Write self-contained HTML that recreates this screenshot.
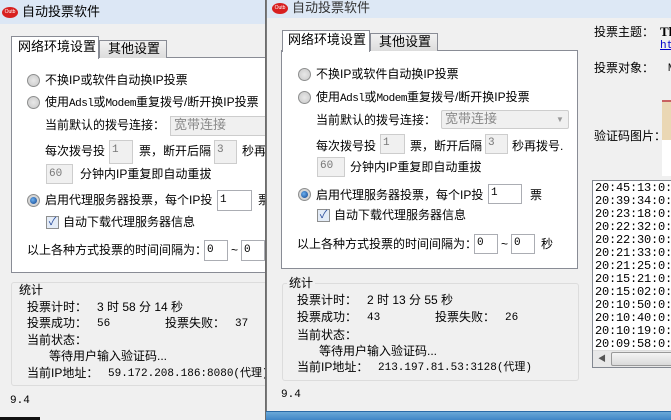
<!DOCTYPE html>
<html><head><meta charset="utf-8"><style>
*{margin:0;padding:0;box-sizing:border-box}
body{width:671px;height:420px;overflow:hidden;background:#f0f0f0;position:relative;font-family:"Liberation Sans","Noto Sans CJK SC",sans-serif;font-size:12px;color:#000}
.a{position:absolute;white-space:nowrap;line-height:14px}
.box{position:absolute;background:#fff;border:1px solid #abadb3}
.dis{background:#f0f0f0;border-color:#cdcdcd}
.rad{position:absolute;width:13px;height:13px;border-radius:50%;border:1px solid #8e8f8f;background:radial-gradient(circle,#e8e8e8,#c8c8c8)}
.rad.on::after{content:"";position:absolute;left:2px;top:2px;width:7px;height:7px;border-radius:50%;background:radial-gradient(circle at 40% 40%,#6cb0f0,#0d3f8a)}
.chk{position:absolute;width:13px;height:13px;border:1px solid #8e8f8f;background:#e4ecf7;color:#2a4d9c;font-size:11px;line-height:11px;text-align:center}
.mono{font-family:"Liberation Mono","Noto Sans CJK SC",monospace;font-size:11px}
.m{font-family:"Liberation Mono",monospace;font-size:11px;letter-spacing:-0.5px}
.win{position:absolute;background:#f0f0f0;overflow:hidden}
.logo{position:absolute;width:16px;height:11px;border-radius:50%;background:#d82020;color:#fff;font-size:5px;line-height:11px;text-align:center}
.log div{height:13px;line-height:13px;overflow:hidden;white-space:nowrap}
</style></head><body>
<!-- back window -->
<div class="win" style="left:0;top:0;width:266px;height:420px;border-right:1px solid #6c6c6c">
 <div style="position:absolute;left:0;top:0;width:266px;height:24px;background:#dce7f5"></div>
 <div class="logo" style="left:2px;top:7px">Outb</div>
 <div class="a" style="left:22px;top:5px;font-size:13px">自动投票软件</div>
 <div style="position:absolute;left:11px;top:57px;width:270px;height:216px;border:1px solid #898c95;background:#fff"></div>
 <div style="position:absolute;left:11px;top:36px;width:88px;height:23px;border:1px solid #898c95;border-bottom:none;background:#fff"></div>
 <div class="a" style="left:18px;top:40px;font-size:13px">网络环境设置</div>
 <div style="position:absolute;left:99px;top:40px;width:68px;height:18px;border:1px solid #898c95;border-bottom:none;background:linear-gradient(#f2f2f2,#dcdcdc)"></div>
 <div class="a" style="left:108px;top:42px;font-size:13px">其他设置</div>
 <div class="rad" style="left:27px;top:74px"></div><div class="a" style="left:45px;top:73px">不换IP或软件自动换IP投票</div>
 <div class="rad" style="left:27px;top:96px"></div><div class="a" style="left:45px;top:95px">使用<span class="m">Adsl</span>或<span class="m">Modem</span>重复拨号/断开换IP投票</div>
 <div class="a" style="left:45px;top:118px">当前默认的拨号连接：</div>
 <div class="box dis" style="left:170px;top:116px;width:100px;height:20px"></div><div class="a" style="left:174px;top:118px;color:#8a8a8a;font-size:13px">宽带连接</div>
 <div class="a" style="left:45px;top:144px">每次拨号投</div>
 <div class="box dis" style="left:109px;top:140px;width:24px;height:24px"></div><div class="a mono" style="left:112px;top:143px;color:#777">1</div>
 <div class="a" style="left:139px;top:144px">票，断开后隔</div>
 <div class="box dis" style="left:214px;top:140px;width:23px;height:24px"></div><div class="a mono" style="left:217px;top:143px;color:#777">3</div>
 <div class="a" style="left:242px;top:144px">秒再</div>
 <div class="box dis" style="left:46px;top:164px;width:27px;height:20px"></div><div class="a mono" style="left:49px;top:167px;color:#777">60</div>
 <div class="a" style="left:80px;top:167px">分钟内IP重复即自动重拔</div>
 <div class="rad on" style="left:27px;top:194px"></div><div class="a" style="left:45px;top:193px">启用代理服务器投票，每个IP投</div>
 <div class="box" style="left:217px;top:190px;width:35px;height:21px"></div><div class="a mono" style="left:220px;top:193px">1</div>
 <div class="a" style="left:258px;top:193px">票</div>
 <div class="chk" style="left:46px;top:216px">✓</div><div class="a" style="left:63px;top:215px">自动下载代理服务器信息</div>
 <div class="a" style="left:27px;top:243px">以上各种方式投票的时间间隔为：</div>
 <div class="box" style="left:204px;top:240px;width:24px;height:21px"></div><div class="a mono" style="left:207px;top:243px">0</div>
 <div class="a" style="left:231px;top:243px">~</div>
 <div class="box" style="left:241px;top:240px;width:24px;height:21px"></div><div class="a mono" style="left:244px;top:243px">0</div>
 <div style="position:absolute;left:11px;top:282px;width:270px;height:104px;border:1px solid #dcdcdc;border-radius:3px"></div>
 <div class="a" style="left:17px;top:283px;background:#f0f0f0;padding:0 2px">统计</div>
 <div class="a" style="left:27px;top:300px">投票计时：</div><div class="a" style="left:97px;top:300px">3 时 58 分 14 秒</div>
 <div class="a" style="left:27px;top:316px">投票成功：</div><div class="a mono" style="left:97px;top:317px">56</div>
 <div class="a" style="left:165px;top:316px">投票失败：</div><div class="a mono" style="left:235px;top:317px">37</div>
 <div class="a" style="left:27px;top:333px">当前状态：</div>
 <div class="a" style="left:49px;top:349px">等待用户输入验证码...</div>
 <div class="a" style="left:27px;top:366px">当前IP地址：</div><div class="a mono" style="left:108px;top:367px">59.172.208.186:8080(代理)</div>
 <div class="a mono" style="left:10px;top:394px">9.4</div>
 <div style="position:absolute;left:0;top:417px;width:40px;height:3px;background:#111"></div>
</div>
<!-- front window -->
<div class="win" style="left:266px;top:0;width:405px;height:412px;border-left:1px solid #7a7a7a">
 <div style="position:absolute;left:0;top:0;width:405px;height:18px;background:#dde8f5"></div>
 <div class="logo" style="left:5px;top:3px">Outb</div>
 <div class="a" style="left:25px;top:1px;font-size:13px;color:#333">自动投票软件</div>
 <div style="position:absolute;left:14px;top:50px;width:297px;height:219px;border:1px solid #898c95;background:#fff"></div>
 <div style="position:absolute;left:15px;top:30px;width:88px;height:22px;border:1px solid #898c95;border-bottom:none;background:#fff"></div>
 <div class="a" style="left:21px;top:33px;font-size:13px">网络环境设置</div>
 <div style="position:absolute;left:103px;top:33px;width:68px;height:18px;border:1px solid #898c95;border-bottom:none;background:linear-gradient(#f2f2f2,#dcdcdc)"></div>
 <div class="a" style="left:112px;top:35px;font-size:13px">其他设置</div>
 <div class="rad" style="left:31px;top:68px"></div><div class="a" style="left:49px;top:67px">不换IP或软件自动换IP投票</div>
 <div class="rad" style="left:31px;top:91px"></div><div class="a" style="left:49px;top:90px">使用<span class="m">Adsl</span>或<span class="m">Modem</span>重复拨号/断开换IP投票</div>
 <div class="a" style="left:49px;top:113px">当前默认的拨号连接：</div>
 <div class="box dis" style="left:174px;top:110px;width:128px;height:19px;border-radius:2px"></div><div class="a" style="left:178px;top:112px;color:#8a8a8a;font-size:13px">宽带连接</div><div class="a" style="left:289px;top:113px;color:#999;font-size:8px">▼</div>
 <div class="a" style="left:49px;top:139px">每次拨号投</div>
 <div class="box dis" style="left:113px;top:134px;width:25px;height:20px"></div><div class="a mono" style="left:116px;top:136px;color:#777">1</div>
 <div class="a" style="left:143px;top:139px">票，断开后隔</div>
 <div class="box dis" style="left:218px;top:134px;width:23px;height:20px"></div><div class="a mono" style="left:221px;top:136px;color:#777">3</div>
 <div class="a" style="left:245px;top:139px">秒再拨号.</div>
 <div class="box dis" style="left:50px;top:157px;width:28px;height:20px"></div><div class="a mono" style="left:53px;top:159px;color:#777">60</div>
 <div class="a" style="left:83px;top:160px">分钟内IP重复即自动重拔</div>
 <div class="rad on" style="left:31px;top:188px"></div><div class="a" style="left:49px;top:188px">启用代理服务器投票，每个IP投</div>
 <div class="box" style="left:221px;top:184px;width:34px;height:20px"></div><div class="a mono" style="left:224px;top:186px">1</div>
 <div class="a" style="left:263px;top:188px">票</div>
 <div class="chk" style="left:50px;top:209px">✓</div><div class="a" style="left:67px;top:208px">自动下载代理服务器信息</div>
 <div class="a" style="left:30px;top:237px">以上各种方式投票的时间间隔为：</div>
 <div class="box" style="left:207px;top:234px;width:24px;height:20px"></div><div class="a mono" style="left:210px;top:236px">0</div>
 <div class="a" style="left:234px;top:237px">~</div>
 <div class="box" style="left:244px;top:234px;width:24px;height:20px"></div><div class="a mono" style="left:247px;top:236px">0</div>
 <div class="a" style="left:274px;top:237px">秒</div>
 <div style="position:absolute;left:15px;top:283px;width:297px;height:98px;border:1px solid #dcdcdc;border-radius:3px"></div>
 <div class="a" style="left:20px;top:276px;background:#f0f0f0;padding:0 2px">统计</div>
 <div class="a" style="left:30px;top:293px">投票计时：</div><div class="a" style="left:100px;top:293px">2 时 13 分 55 秒</div>
 <div class="a" style="left:30px;top:310px">投票成功：</div><div class="a mono" style="left:100px;top:311px">43</div>
 <div class="a" style="left:168px;top:310px">投票失败：</div><div class="a mono" style="left:238px;top:311px">26</div>
 <div class="a" style="left:30px;top:328px">当前状态：</div>
 <div class="a" style="left:52px;top:344px">等待用户输入验证码...</div>
 <div class="a" style="left:30px;top:360px">当前IP地址：</div><div class="a mono" style="left:111px;top:361px">213.197.81.53:3128(代理)</div>
 <div class="a mono" style="left:14px;top:388px">9.4</div>
 <!-- right side -->
 <div class="a" style="left:327px;top:25px">投票主题：</div>
 <div class="a" style="left:393px;top:25px;font-weight:bold;font-family:'Liberation Serif',serif;font-size:13px">Th</div>
 <div class="a" style="left:393px;top:39px;color:#0000cc;text-decoration:underline;font-family:'Liberation Mono',monospace;font-size:11px">htt</div>
 <div class="a" style="left:327px;top:61px">投票对象：</div>
 <div class="a mono" style="left:401px;top:62px">M</div>
 <div style="position:absolute;left:395px;top:100px;width:12px;height:40px;background:#ead7b4;border-top:2px solid #c86060"></div>
 <div style="position:absolute;left:395px;top:140px;width:12px;height:36px;background:#fff"></div>
 <div class="a" style="left:327px;top:129px">验证码图片：</div>
 <div style="position:absolute;left:325px;top:180px;width:90px;height:188px;border:1px solid #828790;background:#fff;overflow:hidden">
  <div class="mono log" style="position:absolute;left:2px;top:1px;font-size:12px;letter-spacing:-0.2px"><div>20:45:13:0:IP</div><div>20:39:34:0:IP</div><div>20:23:18:0:IP</div><div>20:22:32:0:投</div><div>20:22:30:0:IP</div><div>20:21:33:0:投</div><div>20:21:25:0:IP</div><div>20:15:21:0:投</div><div>20:15:02:0:IP</div><div>20:10:50:0:投</div><div>20:10:40:0:投</div><div>20:10:19:0:投</div><div>20:09:58:0:IP</div><div>20:09:49:0:IP</div></div>
  <div style="position:absolute;left:0;top:169px;width:90px;height:18px;background:#e8e8e8;border-top:1px solid #ddd"></div>
  <div class="a" style="left:5px;top:171px;font-size:8px;color:#555">◀</div>
  <div style="position:absolute;left:18px;top:171px;width:80px;height:14px;border:1px solid #999;border-radius:2px;background:linear-gradient(#f4f4f4,#dadada)"></div>
 </div>
</div>
<div style="position:absolute;left:266px;top:411px;width:405px;height:9px;background:linear-gradient(#6aa8d8,#3f86c6);border-top:1px solid #2a6aa6"></div>
</body></html>
